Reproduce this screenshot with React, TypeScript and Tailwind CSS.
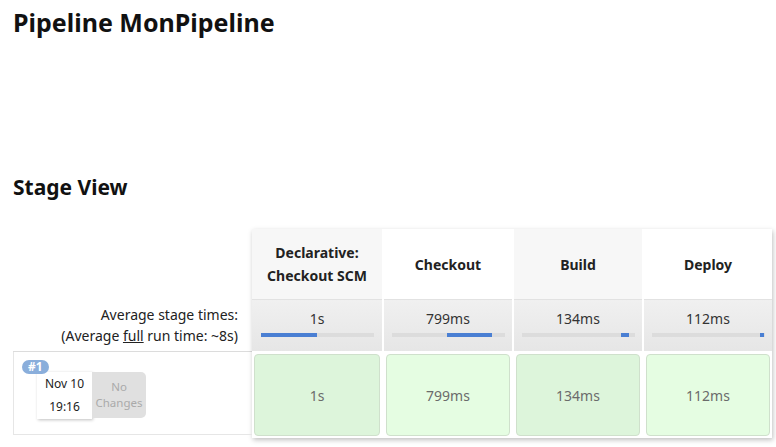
import React from "react";

type Stage = {
  name: string[];
  avg: string;
  fill: [number, number];
  run: string;
};

const STAGES: Stage[] = [
  { name: ["Declarative:", "Checkout SCM"], avg: "1s", fill: [0, 50], run: "1s" },
  { name: ["Checkout"], avg: "799ms", fill: [49, 89], run: "799ms" },
  { name: ["Build"], avg: "134ms", fill: [88, 95], run: "134ms" },
  { name: ["Deploy"], avg: "112ms", fill: [96, 100], run: "112ms" },
];

function StageColumn({ stage, idx }: { stage: Stage; idx: number }) {
  const odd = idx % 2 === 0;
  return (
    <div className={`flex w-[130px] flex-col ${idx > 0 ? "border-l-2 border-white" : ""}`}>
      {/* header */}
      <div
        className={`flex h-[70px] flex-col items-center justify-center text-[14px] font-bold leading-[23px] text-[#222] ${
          odd ? "bg-[#f7f7f7]" : "bg-white"
        }`}
      >
        {stage.name.map((n) => (
          <span key={n}>{n}</span>
        ))}
      </div>

      {/* average */}
      <div className="flex h-[52px] flex-col items-center border-t border-[#e2e2e2] bg-gradient-to-b from-[#f0f0f0] to-[#e6e6e6] pt-[10px]">
        <span className="text-[14px] leading-[18px] text-[#333]">{stage.avg}</span>
        <div className="relative mt-[5px] h-[4px] w-[113px] bg-[#dcdcdc]">
          <div
            className="absolute top-0 h-full bg-[#4a7fd3]"
            style={{ left: `${stage.fill[0]}%`, width: `${stage.fill[1] - stage.fill[0]}%` }}
          />
        </div>
      </div>

      {/* run */}
      <div className="h-[87px] bg-white p-[2px] pt-[3px]">
        <div
          className={`flex h-full items-center justify-center rounded-[4px] border border-[#cfe0cc] text-[14px] text-[#6b6b6b] ${
            odd ? "bg-[#ddf5db]" : "bg-[#e5fde2]"
          }`}
        >
          {stage.run}
        </div>
      </div>
    </div>
  );
}

export default function App() {
  return (
    <div className="min-h-[447px] bg-white pl-[13px] font-['Noto_Sans',sans-serif] text-[#222]">
      <h1 className="pt-[5px] text-[25px] font-bold leading-[34px] text-[#111]">Pipeline MonPipeline</h1>

      <h2 className="mt-[134px] text-[21px] font-bold leading-[28px] text-[#111]">Stage View</h2>

      <div className="mt-[28px] flex">
        {/* left labels */}
        <div className="flex w-[239px] flex-col">
          <div className="h-[70px]" />
          <div className="flex h-[53px] flex-col items-end justify-center border-b border-[#dcdcdc] pr-[14px] text-[14px] leading-[21px] text-[#222]">
            <span>Average stage times:</span>
            <span>
              (Average <span className="underline">full</span> run time: ~8s)
            </span>
          </div>
          <div className="relative h-[83px] border-b border-l border-[#e6e6e6]">
            <span className="absolute left-[8px] top-[8px] z-10 rounded-full bg-[#8aaedb] px-[6px] text-[12px] font-bold leading-[14px] text-white">
              #1
            </span>
            <div className="absolute left-[23px] top-[20px] flex">
              <div className="flex h-[47px] w-[55px] flex-col items-center justify-center gap-[9px] bg-white text-[12px] leading-[14px] text-[#222] shadow-[1px_1px_3px_rgba(0,0,0,0.25)]">
                <span>Nov 10</span>
                <span>19:16</span>
              </div>
              <div className="flex h-[46px] w-[54px] flex-col items-center justify-center rounded-r-[5px] bg-[#e0e0e0] text-[11.5px] leading-[16px] text-[#aaa]">
                <span>No</span>
                <span>Changes</span>
              </div>
            </div>
          </div>
        </div>

        {/* stage table */}
        <div className="flex shadow-[1px_2px_5px_rgba(0,0,0,0.25)]">
          {STAGES.map((s, i) => (
            <StageColumn key={i} stage={s} idx={i} />
          ))}
        </div>
      </div>
    </div>
  );
}
